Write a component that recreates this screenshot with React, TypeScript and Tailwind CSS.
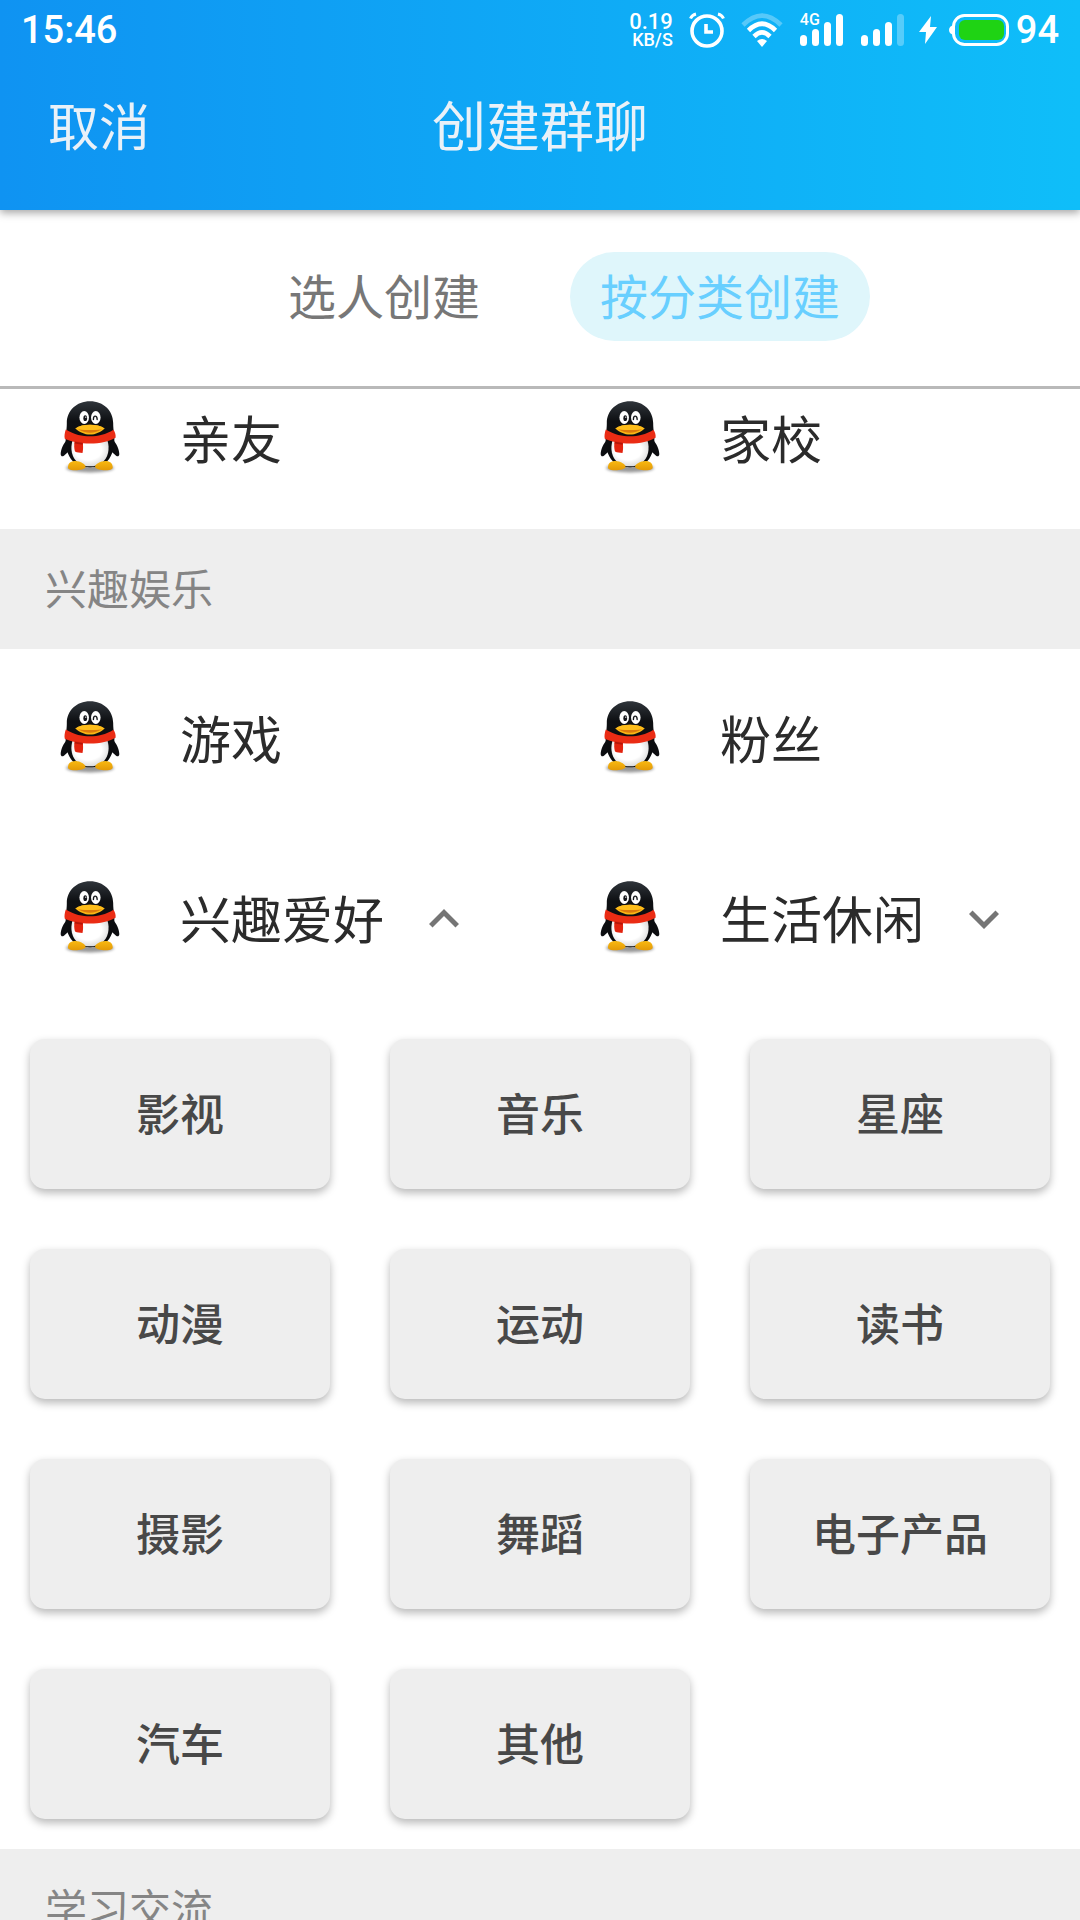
import { useState } from "react";

type Category = { name: string; expandable?: boolean };

const family: Category[] = [{ name: "亲友" }, { name: "家校" }];
const fun: Category[] = [{ name: "游戏" }, { name: "粉丝" }];
const hobbies: Category[] = [
  { name: "兴趣爱好", expandable: true },
  { name: "生活休闲", expandable: true },
];
const topics = [
  "影视", "音乐", "星座",
  "动漫", "运动", "读书",
  "摄影", "舞蹈", "电子产品",
  "汽车", "其他",
];

function Penguin() {
  return (
    <svg viewBox="32 31 176 232" className="h-20 w-[60px] shrink-0" aria-hidden="true">
      <defs>
        <linearGradient id="body" x1="0" y1="0" x2="0" y2="1">
          <stop offset="0" stopColor="#30353b" />
          <stop offset="0.3" stopColor="#0e1013" />
          <stop offset="1" stopColor="#08090b" />
        </linearGradient>
        <linearGradient id="foot" x1="0" y1="0" x2="0" y2="1">
          <stop offset="0" stopColor="#f9b911" />
          <stop offset="1" stopColor="#e39a08" />
        </linearGradient>
        <radialGradient id="belly" cx="0.45" cy="0.4" r="0.6">
          <stop offset="0.6" stopColor="#ffffff" />
          <stop offset="1" stopColor="#dcdcdc" />
        </radialGradient>
        <filter id="soft" x="-30%" y="-60%" width="160%" height="220%">
          <feGaussianBlur stdDeviation="5" />
        </filter>
      </defs>
      <ellipse cx="120" cy="232" rx="70" ry="13" fill="#000" opacity="0.4" filter="url(#soft)" />
      <path d="M54 148C42 160 34 178 34 192C36 202 42 198 50 190L66 176Z" fill="#0c0d10" />
      <path d="M186 148C198 160 206 178 206 192C204 202 198 198 190 190L174 176Z" fill="#0c0d10" />
      <path d="M120 36C80 36 52 64 52 100C52 112 51 122 49 134C47 156 50 186 64 206C76 224 98 230 120 230C142 230 164 224 176 206C190 186 193 156 191 134C189 122 188 112 188 100C188 64 160 36 120 36Z" fill="url(#body)" />
      <path d="M70 148C60 176 67 204 86 218C104 230 136 230 154 218C173 204 180 176 170 148Z" fill="url(#belly)" />
      <path d="M56 226C56 214 74 208 88 213C98 217 107 222 107 229C104 239 66 242 57 234C55 232 55 229 56 226Z" fill="url(#foot)" />
      <path d="M186 226C186 214 168 208 154 213C144 217 135 222 135 229C138 239 176 242 185 234C187 232 187 229 186 226Z" fill="url(#foot)" />
      <path d="M49 119C74 135 98 139 120 139C144 139 166 134 189 120C194 128 196 136 195 143C176 154 150 160 120 160C92 160 64 154 46 146C44 138 46 128 49 119Z" fill="#ea2c14" />
      <path d="M75 153L99 157C100 168 100 178 98 188C90 188 82 187 76 184C73 175 73 163 75 153Z" fill="#e2230f" />
      <path d="M76 155L99 159L98 164L75 160Z" fill="#b41708" />
      <ellipse cx="103" cy="84" rx="14" ry="19" fill="#fff" />
      <ellipse cx="137" cy="84" rx="14" ry="19" fill="#fff" />
      <ellipse cx="106" cy="86" rx="5.5" ry="8.5" fill="#14161a" />
      <circle cx="107.500" cy="83" r="2" fill="#fff" />
      <path d="M130 90C130 82 133 79 136 80C140 81 141 85 141 90" fill="none" stroke="#14161a" strokeWidth="4" strokeLinecap="round" />
      <path d="M77 116C88 108 104 105 120 105C136 105 152 108 163 116C152 126 136 134 120 134C104 134 88 126 77 116Z" fill="#fbb515" />
      <path d="M84 117C100 121 140 121 156 117C146 125 132 129 120 129C108 129 94 125 84 117Z" fill="#dc7a0b" />
      <path d="M77 116C88 108 104 105 120 105C136 105 152 108 163 116C140 122 100 122 77 116Z" fill="#fdbd1b" />
    </svg>
  );
}

function Chevron({ open }: { open: boolean }) {
  return (
    <svg viewBox="0 0 24 24" className="h-[60px] w-[60px] shrink-0" fill="#757575" aria-hidden="true">
      {open ? (
        <path d="M12 8l-6 6 1.410 1.410L12 10.830l4.590 4.580L18 14z" />
      ) : (
        <path d="M16.590 8.590L12 13.170 7.410 8.590 6 10l6 6 6-6z" />
      )}
    </svg>
  );
}

function StatusBar() {
  return (
    <div className="flex h-[60px] items-center pr-[21px] pl-[21px] font-['Roboto',sans-serif] font-medium text-white">
      <span className="flex-1 text-[38px] leading-[60px]">15:46</span>
      <div className="mr-4 flex flex-col items-end pt-px">
        <span className="text-[22px] leading-[18px]">0.19</span>
        <span className="text-[18px] leading-[17px]">KB/S</span>
      </div>
      <svg viewBox="0 0 36 36" className="mr-4 h-9 w-9" fill="none" stroke="#fff" aria-hidden="true">
        <circle cx="18" cy="19" r="15" strokeWidth="3.600" />
        <path d="M17 12V20H24" strokeWidth="3.600" />
        <path d="M1.500 6.500Q3 3 7 2" strokeWidth="3" />
        <path d="M34.500 6.500Q33 3 29 2" strokeWidth="3" />
      </svg>
      <svg viewBox="0 0 42 34" className="mr-[17px] h-[34px] w-[42px]" fill="none" stroke="#fff" strokeWidth="4.600" aria-hidden="true">
        <path d="M2 12Q21 -7 40 12" opacity="0.3" />
        <path d="M7.500 17.500Q21 4 34.500 17.500" />
        <path d="M13 23.500Q21 15.500 29 23.500" />
        <path d="M16 28Q21 24 26 28L21 34Z" fill="#fff" stroke="none" />
      </svg>
      <div className="relative mr-[18px]">
        <svg viewBox="0 0 43 34" className="h-[34px] w-[43px]" fill="#fff" aria-hidden="true">
          <rect x="0" y="22" width="7" height="11" rx="3.500" />
          <rect x="12" y="16" width="7" height="17" rx="3.500" />
          <rect x="24" y="9" width="7" height="24" rx="3.500" />
          <rect x="36" y="1" width="7" height="32" rx="3.500" />
        </svg>
        <span className="absolute top-0 left-0 text-[16px] leading-[14px]">4G</span>
      </div>
      <svg viewBox="0 0 43 34" className="mr-[15px] h-[34px] w-[43px]" fill="#fff" aria-hidden="true">
        <rect x="0" y="22" width="7" height="11" rx="3.500" />
        <rect x="12" y="16" width="7" height="17" rx="3.500" />
        <rect x="24" y="9" width="7" height="24" rx="3.500" />
        <rect x="36" y="1" width="7" height="32" rx="3.500" opacity="0.3" />
      </svg>
      <svg viewBox="0 0 18 28" className="mr-3 h-7 w-[18px]" fill="#fff" aria-hidden="true">
        <path d="M12 0L0 16H7L6 28L18 11H11Z" />
      </svg>
      <svg viewBox="0 0 60 32" className="mr-[7px] h-8 w-[60px]" aria-hidden="true">
        <path d="M5 11Q0 12 0 16Q0 20 5 21Z" fill="#fff" />
        <rect x="4.500" y="1.500" width="54" height="29" rx="11" fill="none" stroke="#fff" strokeWidth="3" />
        <rect x="10" y="6" width="45" height="20" rx="6" fill="#1fd314" />
      </svg>
      <span className="text-[38px] leading-[60px]">94</span>
    </div>
  );
}

function CategoryCell({ item, open, onToggle }: { item: Category; open: boolean; onToggle: () => void }) {
  return (
    <button
      type="button"
      onClick={onToggle}
      aria-expanded={item.expandable ? open : undefined}
      className="flex items-center pl-[60px] text-[51px] leading-[60px] text-[#2b2b2b]"
    >
      <Penguin />
      <span className="ml-[60px] pb-1">{item.name}</span>
      {item.expandable && (
        <span className="ml-[30px]">
          <Chevron open={open} />
        </span>
      )}
    </button>
  );
}

function SectionTitle({ children }: { children: string }) {
  return (
    <h2 className="flex h-[120px] shrink-0 items-center bg-[#eeeeee] px-[45px] pb-1 text-[42px] leading-[60px] text-[#858585]">
      {children}
    </h2>
  );
}

export default function App() {
  const [expanded, setExpanded] = useState("兴趣爱好");
  const cell = (item: Category) => (
    <CategoryCell
      key={item.name}
      item={item}
      open={expanded === item.name}
      onToggle={() => item.expandable && setExpanded(expanded === item.name ? "" : item.name)}
    />
  );

  return (
    <div className="flex h-screen flex-col overflow-hidden bg-white font-['Noto_Sans_CJK_SC',sans-serif]">
      <header className="z-10 shrink-0 bg-linear-to-r/srgb from-[#0f93f2] to-[#0fbef9] shadow-[0_3px_8px_rgba(0,0,0,0.35)]">
        <StatusBar />
        <div className="grid h-[150px] grid-cols-3 items-start px-12 pt-7 text-[#e9f1f8]">
          <button type="button" className="justify-self-start text-[51px] leading-[72px]">取消</button>
          <h1 className="justify-self-center text-[54px] leading-[72px]">创建群聊</h1>
        </div>
      </header>

      <nav className="flex shrink-0 items-center justify-center gap-[60px] border-b-3 border-[#b9b9b9] pt-[42px] pb-[45px] text-[48px] leading-[85px]">
        <button type="button" className="ml-12 rounded-full px-[30px] pb-1 text-[#777777]">选人创建</button>
        <button type="button" className="rounded-full bg-[#dff6fb] px-[30px] pb-1 text-[#68cfff]">按分类创建</button>
      </nav>

      <main className="flex min-h-0 flex-1 flex-col overflow-hidden">
        <div className="grid h-[140px] shrink-0 grid-cols-2 pb-10">{family.map(cell)}</div>
        <SectionTitle>兴趣娱乐</SectionTitle>
        <div className="grid h-[180px] shrink-0 grid-cols-2">{fun.map(cell)}</div>
        <div className="grid h-[180px] shrink-0 grid-cols-2">{hobbies.map(cell)}</div>
        <div className="grid shrink-0 grid-cols-3 gap-[60px] p-[30px]">
          {topics.map((t) => (
            <button
              key={t}
              type="button"
              className="h-[150px] rounded-[15px] bg-[#eeeeee] pb-1 text-[44px] font-medium text-[#484848] shadow-[0_4px_8px_rgba(0,0,0,0.28)]"
            >
              {t}
            </button>
          ))}
        </div>
        <SectionTitle>学习交流</SectionTitle>
      </main>
    </div>
  );
}
